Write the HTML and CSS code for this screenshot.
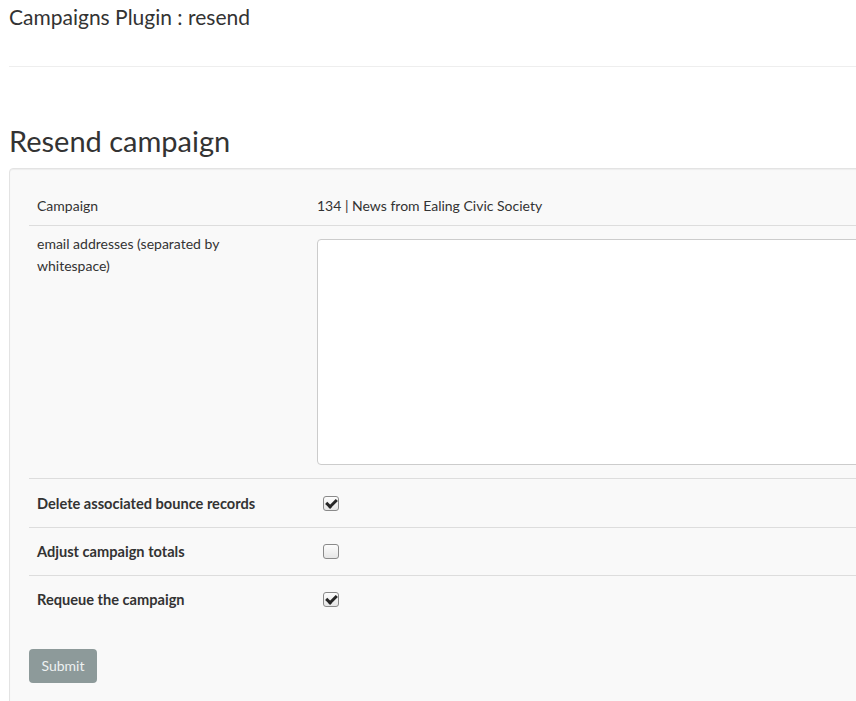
FILE: index.html
```html
<!DOCTYPE html>
<html>
<head>
<meta charset="utf-8">
<link rel="stylesheet" href="styles.css">
</head>
<body>
<div class="page">
  <header class="topbar">
    <h1 class="plugin-title">Campaigns Plugin : resend</h1>
  </header>
  <hr class="divider">
  <h2 class="section-title">Resend campaign</h2>
  <div class="card">
    <form class="form">
      <table class="form-table">
        <tr>
          <td class="label">Campaign</td>
          <td class="value">134 | News from Ealing Civic Society</td>
        </tr>
        <tr>
          <td class="label">email addresses (separated by whitespace)</td>
          <td class="value"><textarea class="emails"></textarea></td>
        </tr>
        <tr class="check-row first">
          <td class="label bold">Delete associated bounce records</td>
          <td class="value"><input type="checkbox" class="check" checked></td>
        </tr>
        <tr class="check-row">
          <td class="label bold">Adjust campaign totals</td>
          <td class="value"><input type="checkbox" class="check"></td>
        </tr>
        <tr class="check-row last">
          <td class="label bold">Requeue the campaign</td>
          <td class="value"><input type="checkbox" class="check" checked></td>
        </tr>
      </table>
      <button type="button" class="submit">Submit</button>
    </form>
  </div>
</div>
</body>
</html>
```

FILE: styles.css
```css
html, body {
  margin: 0;
  padding: 0;
  background: #ffffff;
  overflow: hidden;
}
body {
  font-family: "Lato", "Liberation Sans", sans-serif;
  font-size: 14px;
  line-height: 22px;
  color: #333333;
}
.page {
  width: 1000px;
  padding: 0 0 0 9px;
}
.topbar {
  height: 57px;
  padding-top: 4px;
  box-sizing: border-box;
}
.plugin-title {
  margin: 0;
  font-size: 21px;
  font-weight: 400;
  line-height: 26px;
  color: #333;
}
.divider {
  margin: 9px 0 0 0;
  border: 0;
  border-top: 1px solid #eeeeee;
  height: 0;
}
.section-title {
  margin: 56px 0 0 0;
  font-size: 29px;
  font-weight: 400;
  line-height: 36px;
  color: #333;
}
.card {
  margin-top: 9px;
  background: #f9f9f9;
  border: 1px solid #e3e3e3;
  border-radius: 4px;
  padding: 19px;
  box-shadow: inset 0 1px 1px rgba(0,0,0,0.05);
  height: 600px;
}
.form-table {
  width: 100%;
  border-collapse: collapse;
}
.form-table td {
  padding: 7px 8px 8px 8px;
  vertical-align: top;
  border-bottom: 1px solid #dddddd;
}
.form-table tr.last td {
  border-bottom: 0;
}
.form-table td.label {
  width: 220px;
}
.form-table td.value {
  padding-left: 52px;
}
.form-table tr.check-row td {
  vertical-align: middle;
  padding-top: 8px;
  padding-bottom: 8px;
}
.form-table tr.check-row.first td {
  padding-top: 9px;
}
.bold {
  font-weight: 700;
  font-size: 14.6px;
}
.emails {
  display: block;
  margin: 6px 0 5px 0;
  width: 100%;
  height: 226px;
  box-sizing: border-box;
  border: 1px solid #cccccc;
  border-radius: 4px;
  background: #ffffff;
  resize: none;
}
.check {
  appearance: none;
  -webkit-appearance: none;
  display: block;
  width: 16px;
  height: 15px;
  margin: 8px 0 8px 6px;
  box-sizing: border-box;
  border: 1px solid #8a8a8a;
  border-radius: 3px;
  background: linear-gradient(#fdfdfd, #e6e6e6);
  position: relative;
}
.check:checked::after {
  content: "";
  position: absolute;
  left: 4px;
  top: 0px;
  width: 4px;
  height: 8px;
  border: solid #262626;
  border-width: 0 3px 3px 0;
  transform: rotate(45deg);
}
.submit {
  margin-top: 26px;
  font-family: inherit;
  font-size: 14px;
  line-height: 20px;
  padding: 6px 12px;
  width: 68px;
  height: 34px;
  background: #8d9a9a;
  color: #eef2f2;
  border: 0;
  border-radius: 4px;
}
```
